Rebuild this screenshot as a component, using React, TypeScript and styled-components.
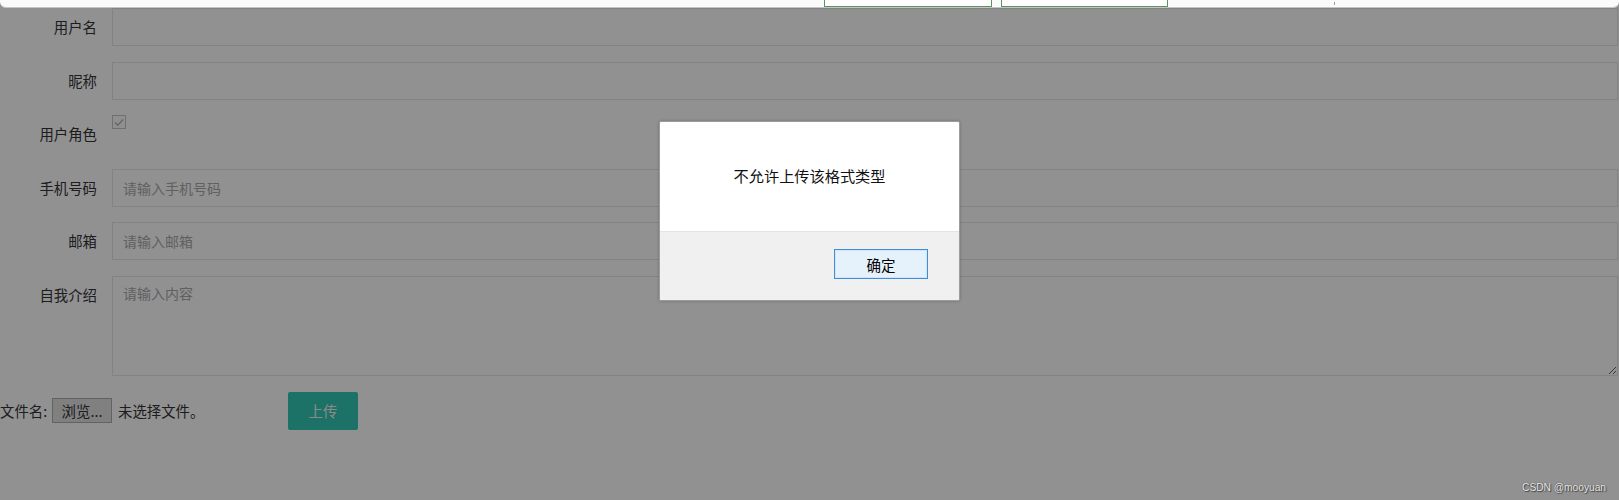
import React from "react";
import styled, { createGlobalStyle } from "styled-components";

const GlobalStyle = createGlobalStyle`
  html, body {
    margin: 0;
    padding: 0;
    background: #ffffff;
  }
  body {
    font-family: "Noto Sans CJK SC", "Noto Sans", sans-serif;
    color: #333;
  }
  * { box-sizing: border-box; }
`;

const Root = styled.div`
  width: 1619px;
  height: 500px;
  display: flex;
  flex-direction: column;
  overflow: hidden;
`;

const ChromeBar = styled.div`
  background: #909193;
`;

const Strip = styled.div`
  height: 8px;
  background: #fbfbfb;
  border-bottom: 1px solid #c4c4c4;
  border-radius: 0 0 6px 6px;
  display: flex;
  align-items: flex-start;
  padding-left: 824px;
  gap: 9px;
`;

const StripBox = styled.span<{ $w: number }>`
  width: ${(p) => p.$w}px;
  height: 7px;
  background: #ffffff;
  border: 1px solid #5d935d;
  border-top: none;
`;

const StripTick = styled.span`
  width: 1px;
  height: 3px;
  margin-top: 2px;
  margin-left: 157px;
  background: #9a9a9a;
`;

const Viewport = styled.div`
  position: relative;
  flex: 1;
  background: #ffffff;
`;

const Form = styled.form`
  display: flex;
  flex-direction: column;
`;

const FormItem = styled.div`
  display: flex;
  margin-bottom: 15.6px;
`;

const Label = styled.label`
  width: 112px;
  flex: none;
  padding: 9px 15px 9px 0;
  text-align: right;
  line-height: 20px;
  font-size: 14.4px;
  color: #333;
`;

const Field = styled.div`
  flex: 1;
  margin-right: 1px;
  min-height: 38px;
`;

const TextInput = styled.input`
  display: block;
  width: 100%;
  height: 38px;
  border: 1px solid #e6e6e6;
  padding: 0 0 0 10px;
  font: inherit;
  font-size: 14px;
  color: #333;
  background: #fff;
  outline: none;
  &::placeholder { color: #a9a9a9; }
`;

const TextArea = styled.textarea`
  display: block;
  width: 100%;
  height: 100px;
  border: 1px solid #e6e6e6;
  padding: 6px 10px;
  line-height: 20px;
  font: inherit;
  font-size: 14px;
  color: #333;
  background: #fff;
  resize: vertical;
  outline: none;
  &::placeholder { color: #a9a9a9; }
`;

const CheckBox = styled.span`
  display: flex;
  align-items: center;
  justify-content: center;
  width: 14px;
  height: 14px;
  border: 1px solid #c6c6c6;
  background: #fbfbfb;
`;

const FileRow = styled.div`
  display: flex;
  align-items: center;
  height: 38px;
`;

const FileLabel = styled.span`
  width: 52px;
  flex: none;
  white-space: nowrap;
  font-size: 14.4px;
  color: #333;
`;

const FilePicker = styled.span`
  width: 236px;
  display: flex;
  align-items: center;
  gap: 6px;
`;

const BrowseButton = styled.button`
  width: 60px;
  height: 25px;
  padding: 0;
  border: 1px solid #adadad;
  background: #e1e1e1;
  font: inherit;
  font-size: 14.4px;
  color: #333;
`;

const NoFile = styled.span`
  font-size: 14.4px;
  color: #333;
`;

const UploadButton = styled.button`
  width: 70px;
  height: 38px;
  border: none;
  border-radius: 2px;
  background: rgb(52, 200, 180);
  color: #f2f2f2;
  font: inherit;
  font-size: 14.4px;
  padding: 0;
`;

const Backdrop = styled.div`
  position: absolute;
  inset: 0;
  background: rgba(0, 0, 2, 0.432);
  display: flex;
  justify-content: center;
  align-items: flex-start;
  padding-top: 113px;
`;

const Dialog = styled.div`
  width: 301px;
  height: 180px;
  background: #fff;
  border: 1px solid #9c9c9c;
  border-radius: 2px;
  box-shadow: 0 0 3px rgba(0, 0, 0, 0.25);
  display: flex;
  flex-direction: column;
  overflow: hidden;
`;

const DialogBody = styled.div`
  height: 109px;
  display: flex;
  align-items: center;
  justify-content: center;
  padding-bottom: 3px;
  font-size: 15.2px;
  color: #111;
`;

const DialogFooter = styled.div`
  flex: 1;
  background: #f0f0f0;
  border-top: 1px solid #e4e4e4;
  display: flex;
  justify-content: flex-end;
  align-items: flex-start;
  padding: 17px 31px 0 0;
`;

const OkButton = styled.button`
  width: 94px;
  height: 30px;
  padding: 0;
  background: #e5f1fb;
  border: 1px solid #3f8fd8;
  box-shadow: inset 0 0 0 1px #d2e6f8;
  font: inherit;
  font-size: 14.5px;
  color: #000;
`;

const Watermark = styled.span`
  position: absolute;
  right: 13px;
  bottom: 7px;
  font-family: "Liberation Sans", Arial, sans-serif;
  font-size: 10.2px;
  color: #ececec;
  text-shadow: 0 0 1px #333, 1px 1px 1px #444;
`;

const CheckMark = () => (
  <svg width="10" height="9" viewBox="0 0 10 9" aria-hidden="true">
    <path d="M1 4.5 L3.8 7.3 L9 1.5" fill="none" stroke="#b4b4b4" strokeWidth="1.3" />
  </svg>
);

export default function App() {
  return (
    <Root>
      <GlobalStyle />
      <ChromeBar>
        <Strip>
          <StripBox $w={168} />
          <StripBox $w={167} />
          <StripTick />
        </Strip>
      </ChromeBar>
      <Viewport>
        <Form onSubmit={(e) => e.preventDefault()}>
          <FormItem>
            <Label>用户名</Label>
            <Field>
              <TextInput type="text" />
            </Field>
          </FormItem>
          <FormItem>
            <Label>昵称</Label>
            <Field>
              <TextInput type="text" />
            </Field>
          </FormItem>
          <FormItem>
            <Label>用户角色</Label>
            <Field>
              <CheckBox>
                <CheckMark />
              </CheckBox>
            </Field>
          </FormItem>
          <FormItem>
            <Label>手机号码</Label>
            <Field>
              <TextInput type="text" placeholder="请输入手机号码" />
            </Field>
          </FormItem>
          <FormItem>
            <Label>邮箱</Label>
            <Field>
              <TextInput type="text" placeholder="请输入邮箱" />
            </Field>
          </FormItem>
          <FormItem>
            <Label>自我介绍</Label>
            <Field>
              <TextArea placeholder="请输入内容" />
            </Field>
          </FormItem>
          <FileRow>
            <FileLabel>文件名:</FileLabel>
            <FilePicker>
              <BrowseButton type="button">浏览...</BrowseButton>
              <NoFile>未选择文件。</NoFile>
            </FilePicker>
            <UploadButton type="button">上传</UploadButton>
          </FileRow>
        </Form>
        <Backdrop>
          <Dialog>
            <DialogBody>不允许上传该格式类型</DialogBody>
            <DialogFooter>
              <OkButton type="button">确定</OkButton>
            </DialogFooter>
          </Dialog>
        </Backdrop>
        <Watermark>CSDN @mooyuan</Watermark>
      </Viewport>
    </Root>
  );
}
